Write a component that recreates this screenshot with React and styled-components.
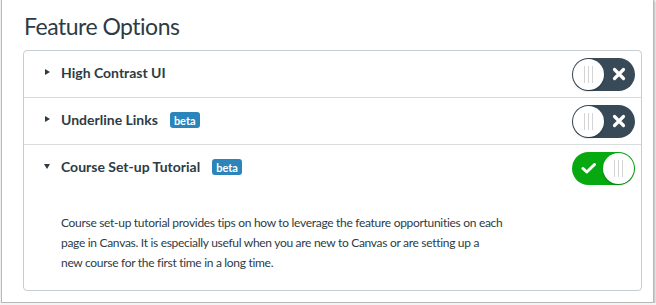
import React from "react";
import styled, { createGlobalStyle } from "styled-components";

const Global = createGlobalStyle`
  html, body { margin: 0; padding: 0; background: #f4f4f4; }
  body { font-family: Lato, "Noto Sans", sans-serif; color: #2d3b45; }
`;

const Frame = styled.div`
  box-sizing: border-box;
  margin-left: 1px;
  width: 653px;
  height: 303px;
  background: #fff;
  border: 1px solid #b8b8b8;
  border-top: none;
  box-shadow: 1px 1px 2px rgba(0, 0, 0, 0.25);
  padding: 9px 11px 0 21px;
`;

const Title = styled.h1`
  margin: 0 0 7px 1px;
  font-size: 23px;
  line-height: 34px;
  letter-spacing: -0.5px;
  font-weight: 400;
  color: #2d3b45;
`;

const Card = styled.div`
  box-sizing: border-box;
  width: 619px;
  border: 1px solid #c7cdd1;
  border-radius: 4px;
  background: #fff;
`;

const Row = styled.div`
  & + & { border-top: 1px solid #d8dcdf; }
`;

const Header = styled.div`
  display: flex;
  align-items: center;
  height: 46px;
  padding: 0 6px 0 21px;
`;

const Caret = styled.span`
  width: 0;
  height: 0;
  border-style: solid;
  ${(p) =>
    p.$open
      ? `border-width: 5px 3.5px 0 3.5px; border-color: #2d3b45 transparent transparent transparent; margin: -3px 11px 0 -1px;`
      : `border-width: 3.5px 0 3.5px 5px; border-color: transparent transparent transparent #2d3b45; margin: -4px 11px 0 0;`}
`;

const Label = styled.span`
  font-size: 14px;
  font-weight: 700;
  color: #2d3b45;
  margin-top: -4px;
`;

const Badge = styled.span`
  display: inline-flex;
  align-items: center;
  justify-content: center;
  margin-left: 12px;
  margin-top: -2px;
  height: 16px;
  padding: 0 4px;
  border-radius: 3px;
  background: #2b84ba;
  color: #fff;
  font-size: 11px;
  font-weight: 700;
`;

const Spacer = styled.div`
  flex: 1;
`;

const Track = styled.div`
  position: relative;
  box-sizing: border-box;
  width: 63px;
  height: 33px;
  border-radius: 17px;
  background: ${(p) => (p.$on ? "#06a90f" : "#384a58")};
  display: flex;
  align-items: center;
  justify-content: ${(p) => (p.$on ? "flex-start" : "flex-end")};
  padding: ${(p) => (p.$on ? "0 0 0 9px" : "0 9px 0 0")};
`;

const Knob = styled.div`
  position: absolute;
  top: 1px;
  ${(p) => (p.$on ? "right: 1px;" : "left: 1px;")}
  width: 31px;
  height: 31px;
  border-radius: 50%;
  background: #fff;
  box-shadow: 0 1px 2px rgba(0, 0, 0, 0.3);
  display: flex;
  align-items: center;
  justify-content: center;
  gap: 3px;
`;

const Grip = styled.span`
  width: 1px;
  height: 17px;
  background: #d4d4d4;
`;

const Description = styled.p`
  margin: 0;
  padding: 22px 20px 17px 37px;
  font-size: 12px;
  letter-spacing: -0.3px;
  line-height: 20px;
  color: #2d3b45;
`;

const CrossIcon = () => (
  <svg width="14" height="14" viewBox="0 0 14 14">
    <path d="M2.5 2.5 L11.5 11.5 M11.5 2.5 L2.5 11.5" stroke="#fff" strokeWidth="3.2" strokeLinecap="round" />
  </svg>
);

const CheckIcon = () => (
  <svg width="16" height="12" viewBox="0 0 16 12">
    <path d="M2 6.5 L5.8 10 L13.5 2.5" stroke="#fff" strokeWidth="3" fill="none" strokeLinecap="round" strokeLinejoin="round" />
  </svg>
);

const Toggle = ({ on }) => (
  <Track $on={on}>
    {on ? <CheckIcon /> : <CrossIcon />}
    <Knob $on={on}>
      <Grip />
      <Grip />
      <Grip />
    </Knob>
  </Track>
);

const features = [
  { name: "High Contrast UI", beta: false, on: false, open: false },
  { name: "Underline Links", beta: true, on: false, open: false },
  { name: "Course Set-up Tutorial", beta: true, on: true, open: true },
];

export default function App() {
  return (
    <>
      <Global />
      <Frame>
        <Title>Feature Options</Title>
        <Card>
          {features.map((f) => (
            <Row key={f.name}>
              <Header>
                <Caret $open={f.open} />
                <Label>{f.name}</Label>
                {f.beta && <Badge>beta</Badge>}
                <Spacer />
                <Toggle on={f.on} />
              </Header>
              {f.open && (
                <Description>
                  Course set-up tutorial provides tips on how to leverage the feature opportunities on each
                  <br />
                  page in Canvas. It is especially useful when you are new to Canvas or are setting up a
                  <br />
                  new course for the first time in a long time.
                </Description>
              )}
            </Row>
          ))}
        </Card>
      </Frame>
    </>
  );
}
